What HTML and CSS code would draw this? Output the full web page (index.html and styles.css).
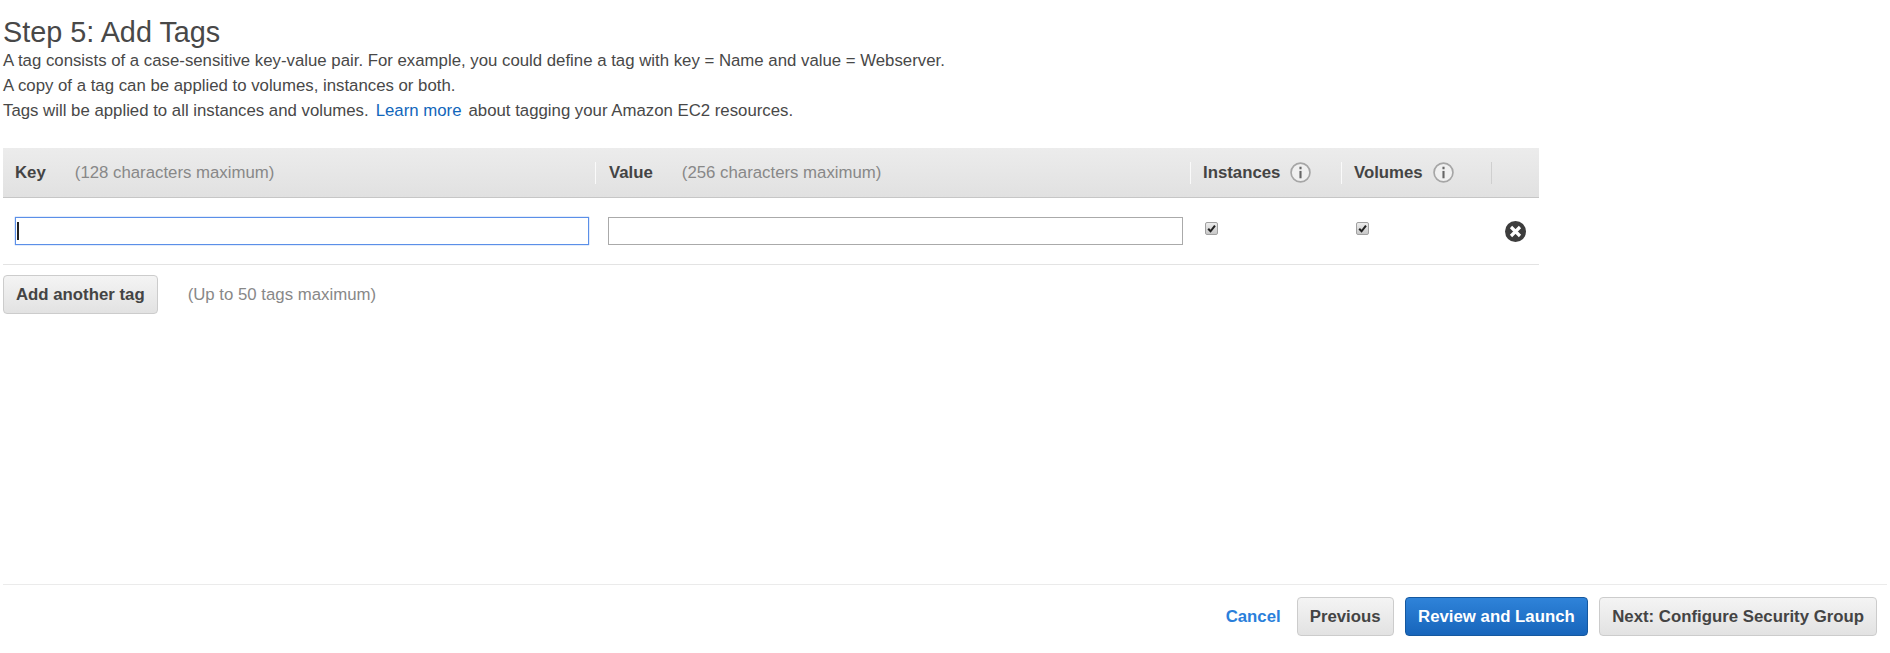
FILE: index.html
```html
<!DOCTYPE html>
<html>
  <head>
    <title>Step 5: Add Tags</title>
    <meta name="viewport" content="width=device-width, initial-scale=1" />
    <link rel="stylesheet" href="styles.css">
  </head>
  <body>
    <h1>Step 5: Add Tags</h1>
    <div class="intro">
      <p>A tag consists of a case-sensitive key-value pair. For example, you could define a tag with key = Name and value = Webserver.</p>
      <p>A copy of a tag can be applied to volumes, instances or both.</p>
      <p>Tags will be applied to all instances and volumes.<a href="#" class="learn">Learn more</a>about tagging your Amazon EC2 resources.</p>
    </div>

    <div class="tags">
      <div class="tags-head">
        <div class="cell"><b>Key</b><span class="hint">(128 characters maximum)</span></div>
        <div class="cell sep value-cell"><b>Value</b><span class="hint">(256 characters maximum)</span></div>
        <div class="cell sep">
          <b>Instances</b>
          <svg class="info" viewBox="0 0 20 20"><circle cx="10" cy="10" r="9"/><rect x="9" y="8.5" width="2" height="7"/><rect x="9" y="4.5" width="2" height="2.4"/></svg>
        </div>
        <div class="cell sep">
          <b>Volumes</b>
          <svg class="info" viewBox="0 0 20 20"><circle cx="10" cy="10" r="9"/><rect x="9" y="8.5" width="2" height="7"/><rect x="9" y="4.5" width="2" height="2.4"/></svg>
        </div>
        <div class="cell sep last"></div>
      </div>
      <div class="tags-row">
        <div class="field key-field">
          <input class="text-input focused" type="text" />
          <span class="caret"></span>
        </div>
        <div class="field value-field"><input class="text-input" type="text" /></div>
        <div class="check-cell">
          <span class="check"><svg viewBox="0 0 13 13"><path d="M2.6 6.8l2.8 3 5.2-6.6" /></svg></span>
        </div>
        <div class="check-cell">
          <span class="check"><svg viewBox="0 0 13 13"><path d="M2.6 6.8l2.8 3 5.2-6.6" /></svg></span>
        </div>
        <div class="remove-cell">
          <svg class="remove" viewBox="0 0 21 21"><circle cx="10.5" cy="10.5" r="10.5"/><path d="M6 6l9 9M15 6l-9 9"/></svg>
        </div>
      </div>
    </div>

    <div class="add-row">
      <button class="btn" type="button">Add another tag</button>
      <span class="hint">(Up to 50 tags maximum)</span>
    </div>

    <div class="footer">
      <a href="#" class="cancel">Cancel</a>
      <button class="btn" type="button">Previous</button>
      <button class="btn primary" type="button">Review and Launch</button>
      <button class="btn" type="button">Next: Configure Security Group</button>
    </div>
  </body>
</html>
```

FILE: styles.css
```css
html, body {
  margin: 0;
  height: 653px;
  overflow: hidden;
}

body {
  font-family: "Liberation Sans", Arial, sans-serif;
  font-size: 16.8px;
  color: #484848;
  background: #fff;
  padding: 0 3px;
  box-sizing: border-box;
}

h1 {
  margin: 0;
  padding-top: 16px;
  font-size: 28.8px;
  line-height: 32px;
  font-weight: normal;
}

.intro {
  margin-bottom: 25px;
}

.intro p {
  margin: 0;
  line-height: 25px;
}

.learn {
  color: #1166bb;
  text-decoration: none;
  margin: 0 7px;
}

.tags {
  width: 1536px;
}

.tags-head, .tags-row {
  display: grid;
  grid-template-columns: 592px 595px 151px 150px 48px;
}

.tags-head {
  height: 49px;
  align-items: center;
  background: linear-gradient(#ececec, #e1e1e1);
  border-bottom: 1px solid #c6c6c6;
}

.cell {
  display: flex;
  align-items: center;
  height: 22px;
  padding-left: 12px;
}

.cell.sep {
  border-left: 1px solid #fafafa;
}

.cell.last {
  border-left-color: #cfcfcf;
}

.cell.value-cell {
  padding-left: 13px;
}

.cell b {
  color: #444;
}

.hint {
  color: #888;
}

.cell .hint {
  margin-left: 29px;
}

.info {
  width: 21px;
  height: 21px;
  margin-left: 10px;
}

.info circle {
  fill: #f0f0f0;
  stroke: #a6a6a6;
  stroke-width: 1.6;
}

.info rect {
  fill: #666;
}

.tags-row {
  height: 66px;
  align-items: center;
  border-bottom: 1px solid #e3e3e3;
}

.field {
  position: relative;
  padding-left: 12px;
}

.value-field {
  padding-left: 13px;
}

.text-input {
  display: block;
  width: 575px;
  height: 28px;
  box-sizing: border-box;
  border: 1px solid #aaa;
  outline: none;
  padding: 0;
  background: #fff;
}

.key-field .text-input {
  width: 574px;
}

.text-input.focused {
  border-color: #5b8fe8;
  box-shadow: 0 0 1px #5b8fe8;
}

.caret {
  position: absolute;
  left: 14px;
  top: 5px;
  width: 2px;
  height: 18px;
  background: #222;
}

.check-cell {
  padding-left: 15px;
  display: flex;
}

.check {
  display: block;
  width: 13px;
  height: 13px;
  margin-top: -5px;
  box-sizing: border-box;
  border: 1px solid #a0a0a0;
  border-radius: 2px;
  background: linear-gradient(#ececec, #c8c8c8);
}

.check svg {
  display: block;
  width: 11px;
  height: 11px;
}

.check path {
  fill: none;
  stroke: #222;
  stroke-width: 2.4;
}

.remove-cell {
  padding-left: 14px;
  display: flex;
}

.remove {
  width: 21px;
  height: 21px;
}

.remove circle {
  fill: #3d3d3d;
}

.remove path {
  stroke: #fff;
  stroke-width: 3.2;
}

.add-row {
  display: flex;
  align-items: center;
  margin-top: 10px;
}

.add-row .hint {
  margin-left: 30px;
}

.btn {
  height: 39px;
  padding: 0 12px;
  font-family: inherit;
  font-size: 16.8px;
  font-weight: bold;
  color: #444;
  background: linear-gradient(#f4f4f4, #e2e2e2);
  border: 1px solid #ccc;
  border-radius: 4px;
}

.btn.primary {
  padding: 0 12.5px;
  color: #fff;
  background: linear-gradient(#2f83d9, #1765bb);
  border-color: #15589f;
}

.footer {
  display: flex;
  justify-content: flex-end;
  align-items: center;
  gap: 11px;
  margin-top: 270px;
  padding: 12px 10px 0 0;
  border-top: 1px solid #ebebeb;
}

.cancel {
  margin-right: 5px;
  color: #2a7fdb;
  font-weight: bold;
  text-decoration: none;
}
```
